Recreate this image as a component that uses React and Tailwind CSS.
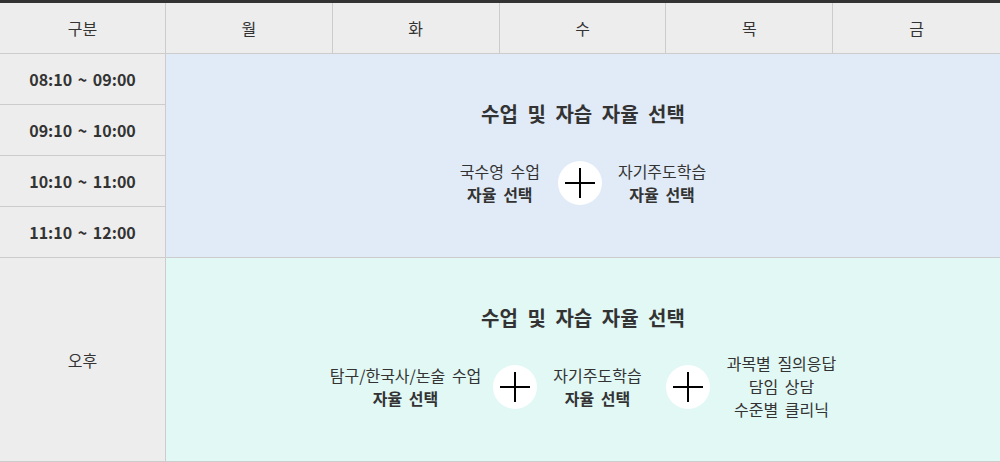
const days = ['월', '화', '수', '목', '금'];
const times = ['08:10 ~ 09:00', '09:10 ~ 10:00', '10:10 ~ 11:00', '11:10 ~ 12:00'];

function Plus({ className = '' }) {
  return (
    <div className={`w-[44px] h-[44px] rounded-full bg-white flex items-center justify-center shrink-0 ${className}`}>
      <svg width="30" height="30" viewBox="0 0 30 30">
        <path d="M0 15H30M15 0V30" stroke="#000" strokeWidth="2" />
      </svg>
    </div>
  );
}

function Item({ lines }) {
  return (
    <div className="flex flex-col items-center text-[16px] leading-[23px] text-[#333] [word-spacing:3px]">
      {lines.map((l, i) => (
        <span key={i} className={l.bold ? 'font-bold' : ''}>{l.text}</span>
      ))}
    </div>
  );
}

function Block({ bg, children }) {
  return (
    <div className={`${bg} border-b border-[#ccc] flex flex-col items-center pt-[47px]`}>
      <h3 className="text-[20px] leading-[26px] font-bold text-[#333] [word-spacing:5px]">수업 및 자습 자율 선택</h3>
      <div className="mt-[21px] h-[69px] flex items-center">{children}</div>
    </div>
  );
}

export default function App() {
  return (
    <div className="w-[1000px] h-[462px] bg-white border-t-[3px] border-[#333] font-['Noto_Sans_CJK_KR','Noto_Sans',sans-serif] text-[#333]">
      {/* header */}
      <div className="grid grid-cols-[166px_repeat(5,1fr)] h-[51px] bg-[#ededed] border-b border-[#ccc] text-[16px]">
        <div className="flex items-center justify-center border-r border-[#ccc]">구분</div>
        {days.map((d, i) => (
          <div key={d} className={`flex items-center justify-center ${i < 4 ? 'border-r border-[#ccc]' : ''}`}>{d}</div>
        ))}
      </div>

      {/* body */}
      <div className="grid grid-cols-[166px_1fr] grid-rows-[repeat(4,51px)_204px]">
        {times.map((t, i) => (
          <div
            key={t}
            className="col-start-1 bg-[#ededed] border-r border-b border-[#ccc] flex items-center justify-center text-[16px] font-bold [word-spacing:2px]"
            style={{ gridRowStart: i + 1 }}
          >
            {t}
          </div>
        ))}
        <div className="col-start-1 row-start-5 bg-[#ededed] border-r border-b border-[#ccc] flex items-center justify-center text-[16px]">
          오후
        </div>

        <div className="col-start-2 row-start-1 row-span-4 grid">
          <Block bg="bg-[#e1ebf7]">
            <Item lines={[{ text: '국수영 수업' }, { text: '자율 선택', bold: true }]} />
            <Plus className="ml-[18px] mr-[16px]" />
            <Item lines={[{ text: '자기주도학습' }, { text: '자율 선택', bold: true }]} />
          </Block>
        </div>
        <div className="col-start-2 row-start-5 grid">
          <Block bg="bg-[#e1f8f5]">
            <Item lines={[{ text: '탐구/한국사/논술 수업' }, { text: '자율 선택', bold: true }]} />
            <Plus className="ml-[12px] mr-[16px]" />
            <Item lines={[{ text: '자기주도학습' }, { text: '자율 선택', bold: true }]} />
            <Plus className="ml-[24px] mr-[17px]" />
            <Item lines={[{ text: '과목별 질의응답' }, { text: '담임 상담' }, { text: '수준별 클리닉' }]} />
          </Block>
        </div>
      </div>
    </div>
  );
}
